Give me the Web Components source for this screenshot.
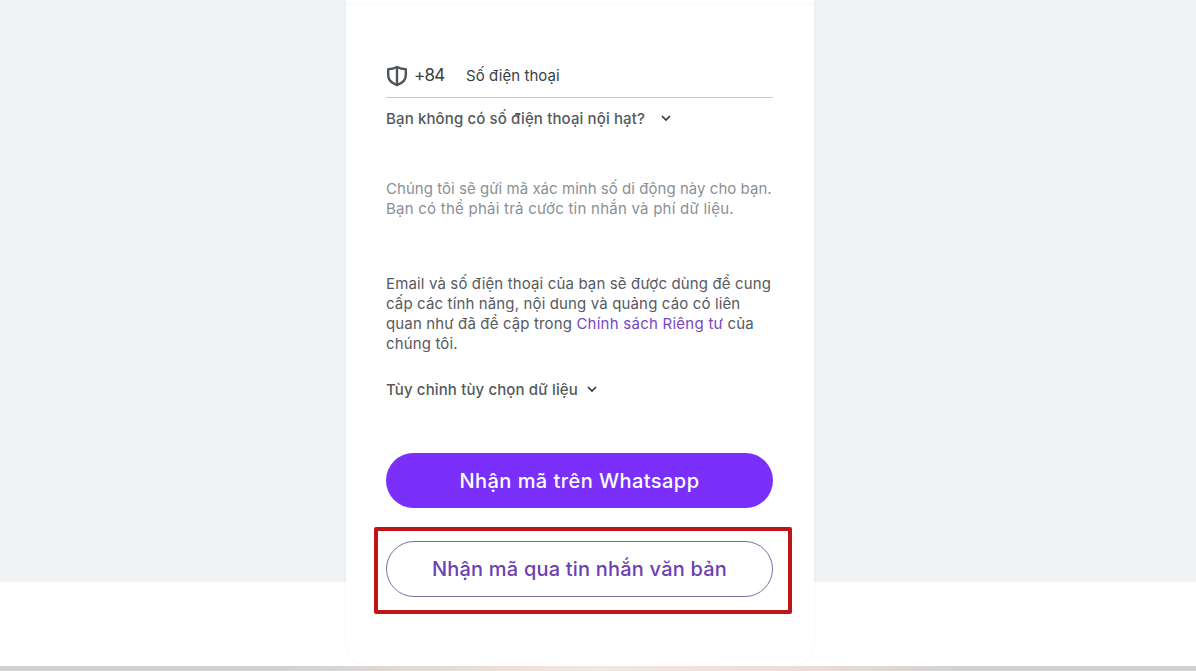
<!DOCTYPE html>
<html lang="vi">
<head>
<meta charset="utf-8">
<title>Số điện thoại</title>
<style>
html, body { margin: 0; height: 671px; overflow: hidden; background: #fff; }
body { font-family: Inter, "Noto Sans", "Liberation Sans", sans-serif; }
</style>
</head>
<body>
<signup-page>
  <signup-card>
    <phone-field code="+84" placeholder="Số điện thoại"></phone-field>
    <toggle-row class="local" gap="15" weight="450">Bạn không có số điện thoại nội hạt?</toggle-row>
    <card-text class="hint" tone="#8a9095" spacing="0.04">Chúng tôi sẽ gửi mã xác minh số di động này cho bạn.<br><span>Bạn có thể phải trả cước tin nhắn và phí dữ liệu.</span></card-text>
    <card-text class="legal" tone="#565a5f" spacing="0.14">Email và số điện thoại của bạn sẽ được dùng để cung cấp các tính năng, nội dung và quảng cáo có liên quan như đã đề cập trong <a>Chính sách Riêng tư</a> của chúng tôi.</card-text>
    <toggle-row class="data" gap="8" weight="450">Tùy chỉnh tùy chọn dữ liệu</toggle-row>
    <pill-button class="primary" kind="solid">Nhận mã trên Whatsapp</pill-button>
    <pill-button class="secondary" kind="outline" marked>Nhận mã qua tin nhắn văn bản</pill-button>
  </signup-card>
</signup-page>

<script>
class SignupPage extends HTMLElement {
    constructor() {
        super();
        this.attachShadow({ mode: 'open' });
        this.shadowRoot.innerHTML = `
            <style>
                :host {
                    display: flex;
                    flex-direction: column;
                    height: 671px;
                    overflow: hidden;
                }
                .main {
                    height: 666px;
                    display: flex;
                    padding-left: 346px;
                    background: linear-gradient(#f0f3f6 0, #f0f3f6 582px, #fff 582px);
                }
                .strip {
                    height: 5px;
                    background: linear-gradient(90deg, #d2d2d2 0, #d2d2d2 24%, #ecdfd6 42%, #f2e8e0 50%, #ecdcd6 68%, #d2d2d2 80%, #d2d2d2 100%);
                }
            </style>
            <div class="main"><slot></slot></div>
            <div class="strip"></div>
        `;
    }
}

class SignupCard extends HTMLElement {
    constructor() {
        super();
        this.attachShadow({ mode: 'open' });
        this.shadowRoot.innerHTML = `
            <style>
                :host {
                    display: flex;
                    flex-direction: column;
                    box-sizing: border-box;
                    width: 468px;
                    height: 666px;
                    padding: 0 41px 0 40px;
                    background: linear-gradient(#fff 3px, #fafafa 3px, #fafafa 4px, #fff 4px);
                    border-radius: 0 0 24px 24px;
                    box-shadow: 0 0 2px rgba(120, 130, 150, 0.18);
                }
                ::slotted(.local) { margin-top: 10px; }
                ::slotted(.hint) { margin-top: 51px; }
                ::slotted(.legal) { margin-top: 55px; }
                ::slotted(.data) { margin-top: 25px; }
                ::slotted(.primary) { margin-top: 54px; }
                ::slotted(.secondary) { margin-top: 33px; }
            </style>
            <slot></slot>
        `;
    }
}

class PhoneField extends HTMLElement {
    constructor() {
        super();
        this.attachShadow({ mode: 'open' });
        this.shadowRoot.innerHTML = `
            <style>
                :host {
                    display: flex;
                    align-items: center;
                    box-sizing: border-box;
                    height: 43px;
                    margin-top: 55px;
                    padding-bottom: 2px;
                    border-bottom: 1px solid #c6c8ca;
                }
                svg { width: 22px; height: 22px; flex: none; margin-right: 6px; position: relative; top: 1px; }
                .code { font-size: 17px; letter-spacing: -0.8px; color: #3b4045; width: 52px; }
                .placeholder { font-size: 15px; letter-spacing: 0.06px; color: #3b4045; }
            </style>
            <svg viewBox="0 0 22 22" fill="none" stroke="#50555a" stroke-width="2.4" stroke-linejoin="round">
                <path d="M11 2 C8 3.6 5.4 4.2 2.2 4.2 V10 C2.2 15 6 18.4 11 20 C16 18.4 19.8 15 19.8 10 V4.2 C16.6 4.2 14 3.6 11 2 Z"/>
                <path d="M11 2 V20"/>
            </svg>
            <span class="code">${this.getAttribute('code')}</span>
            <span class="placeholder">${this.getAttribute('placeholder')}</span>
        `;
    }
}

class ToggleRow extends HTMLElement {
    constructor() {
        super();
        this.attachShadow({ mode: 'open' });
        this.shadowRoot.innerHTML = `
            <style>
                :host {
                    display: flex;
                    align-items: center;
                    height: 20px;
                    font-size: 15px;
                    font-weight: ${this.getAttribute('weight')};
                    letter-spacing: 0.13px;
                    color: #54595e;
                    gap: ${this.getAttribute('gap')}px;
                }
                svg { width: 12px; height: 12px; flex: none; }
            </style>
            <slot></slot>
            <svg viewBox="0 0 12 12" fill="none" stroke="#33383d" stroke-width="1.7">
                <path d="M2 4 L6 8 L10 4"/>
            </svg>
        `;
    }
}

class CardText extends HTMLElement {
    constructor() {
        super();
        this.attachShadow({ mode: 'open' });
        this.shadowRoot.innerHTML = `
            <style>
                :host {
                    display: block;
                    font-size: 15px;
                    line-height: 20px;
                    letter-spacing: ${this.getAttribute('spacing')}px;
                    color: ${this.getAttribute('tone')};
                }
                ::slotted(a) { color: #7a45c4; letter-spacing: 0.25px; }
                ::slotted(span) { letter-spacing: 0.24px; }
            </style>
            <slot></slot>
        `;
    }
}

class PillButton extends HTMLElement {
    constructor() {
        super();
        this.attachShadow({ mode: 'open' });
        const solid = this.getAttribute('kind') === 'solid';
        const marked = this.hasAttribute('marked');
        this.shadowRoot.innerHTML = `
            <style>
                :host {
                    display: block;
                    position: relative;
                }
                .pill {
                    display: flex;
                    align-items: center;
                    justify-content: center;
                    box-sizing: border-box;
                    height: ${solid ? 55 : 56}px;
                    border-radius: 28px;
                    font-size: 20px;
                    font-weight: 500;
                    letter-spacing: ${solid ? 0.45 : 0.2}px;
                    background: ${solid ? '#7a2ffb' : '#fff'};
                    color: ${solid ? '#fff' : '#6d3fb0'};
                    border: ${solid ? '0' : '1px solid #7b6aa6'};
                }
                .mark {
                    position: absolute;
                    left: -12px;
                    right: -19px;
                    top: -14px;
                    bottom: -17px;
                    border: 4px solid #c01518;
                    border-radius: 2px;
                    pointer-events: none;
                }
            </style>
            <div class="pill"><slot></slot></div>
            ${marked ? '<div class="mark"></div>' : ''}
        `;
    }
}

customElements.define('signup-page', SignupPage);
customElements.define('signup-card', SignupCard);
customElements.define('phone-field', PhoneField);
customElements.define('toggle-row', ToggleRow);
customElements.define('card-text', CardText);
customElements.define('pill-button', PillButton);
</script>
</body>
</html>
